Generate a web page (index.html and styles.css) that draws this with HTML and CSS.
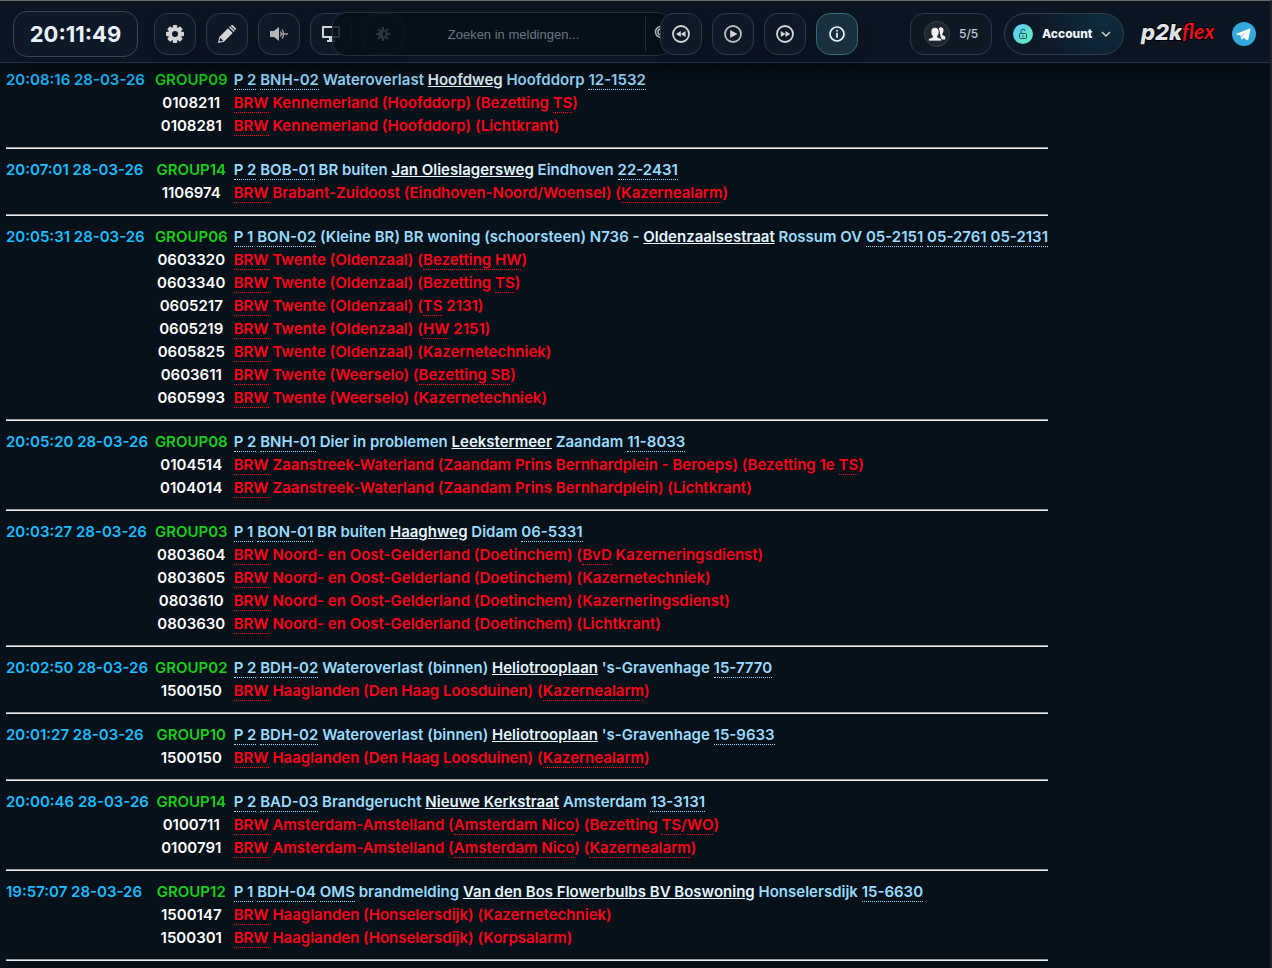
FILE: index.html
```html
<!DOCTYPE html>
<html lang="nl">
<head>
  <meta charset="UTF-8">
  <meta name="viewport" content="width=device-width, initial-scale=1.0">
  <title>p2kflex</title>
  <link rel="stylesheet" href="styles.css">
</head>
<body>
  <header class="topbar">
    <div class="clock">20:11:49</div>

    <div class="tools">
      <button class="tool" type="button" aria-label="Instellingen">
        <svg width="20" height="20" viewBox="0 0 20 20"><g fill="#d4d4d4"><rect x="7.8" y="1" width="4.4" height="18" rx="1"/><rect x="7.8" y="1" width="4.4" height="18" rx="1" transform="rotate(45 10 10)"/><rect x="7.8" y="1" width="4.4" height="18" rx="1" transform="rotate(90 10 10)"/><rect x="7.8" y="1" width="4.4" height="18" rx="1" transform="rotate(135 10 10)"/><circle cx="10" cy="10" r="6.8"/></g><circle cx="10" cy="10" r="3" fill="#0d1927"/></svg>
      </button>
      <button class="tool" type="button" aria-label="Bewerken">
        <svg width="20" height="20" viewBox="0 0 20 20"><path fill="#d4d4d4" d="M1 19l1.300-6L11 4.300l4.700 4.700L7 17.700zM12 3.300l1-1 4.700 4.700-1 1zM14 1.500c.6-.6 1.500-.6 2.100 0l2.400 2.400c.6.6.6 1.500 0 2.100l-.3.3-4.500-4.500z"/><path d="M3.200 13.800l3 3-2.900.7-.8-.8z" fill="#0d1927"/></svg>
      </button>
      <button class="tool" type="button" aria-label="Geluid">
        <svg width="20" height="20" viewBox="0 0 20 20"><path fill="#b8b8b8" d="M1 7h4l5-4v14l-5-4H1z"/><path d="M11.500 7.500q1.500 2.500 0 5M13 5.500q3 4.500 0 9" fill="none" stroke="#a5a5a5" stroke-width="1.300"/><path d="M12 10h7" stroke="#a5a5a5" stroke-width="1.500"/></svg>
      </button>
      <button class="tool" type="button" aria-label="Scherm">
        <svg width="20" height="20" viewBox="0 0 20 20"><path fill="#d4d4d4" fill-rule="evenodd" d="M2 2h16q1 0 1 1v10q0 1-1 1h-6v2h2v2H6v-2h2v-2H2q-1 0-1-1V3q0-1 1-1zm1 2v8h14V4z"/></svg>
      </button>
      <button class="tool" type="button" aria-label="Helderheid">
        <svg width="20" height="20" viewBox="0 0 20 20"><path d="M10 3v3M10 14v3M3 10h3M14 10h3M5 5l2 2M13 13l2 2M15 5l-2 2M7 13l-2 2" stroke="#e0e0e0" stroke-width="2"/><circle cx="10" cy="10" r="3.600" fill="none" stroke="#e0e0e0" stroke-width="1.800"/><path d="M10 6.400a3.600 3.600 0 0 0 0 7.200z" fill="#e0e0e0"/></svg>
      </button>
    </div>

    <form class="search">
      <input class="search-input" type="search" placeholder="Zoeken in meldingen..." aria-label="Zoeken in meldingen">
      <button class="search-button" type="button" aria-label="Zoeken">
        <svg width="18" height="18" viewBox="0 0 18 18" fill="none" stroke="#b5bcc2" stroke-width="1.500"><circle cx="7" cy="7" r="5.500"/><path d="M7 4a3 3 0 0 0 0 6M11 11l5 5"/></svg>
      </button>
    </form>

    <div class="tools player">
      <button class="tool" type="button" aria-label="Vorige">
        <svg width="20" height="20" viewBox="0 0 20 20"><circle cx="10" cy="10" r="8" fill="none" stroke="#d4d4d4" stroke-width="1.800"/><path fill="#d4d4d4" d="M9.800 7v6L5 10zM14.500 7v6l-4.700-3z"/></svg>
      </button>
      <button class="tool" type="button" aria-label="Afspelen">
        <svg width="20" height="20" viewBox="0 0 20 20"><circle cx="10" cy="10" r="8" fill="none" stroke="#bcbcbc" stroke-width="1.800"/><path fill="#d4d4d4" d="M7.200 6v8l7.300-4z"/></svg>
      </button>
      <button class="tool" type="button" aria-label="Volgende">
        <svg width="20" height="20" viewBox="0 0 20 20"><circle cx="10" cy="10" r="8" fill="none" stroke="#d4d4d4" stroke-width="1.800"/><path fill="#d4d4d4" d="M5.800 7v6l4.700-3zM10.500 7v6l4.700-3z"/></svg>
      </button>
      <button class="tool tool-active" type="button" aria-label="Informatie">
        <svg width="20" height="20" viewBox="0 0 20 20"><circle cx="10" cy="10" r="7" fill="none" stroke="#e5f7fc" stroke-width="1.700"/><path d="M10 8.800v5M10 6v1.500" stroke="#e5f7fc" stroke-width="1.700"/></svg>
      </button>
    </div>

    <div class="users">
      <span class="users-icon">
        <svg width="18" height="18" viewBox="0 0 18 18" fill="#f2f2f2"><path d="M10.800 3.500c.5-1.500 4.700-2 4.700 1.700 0 2-.8 2.800-1.200 3.600v1.300l3 1.500v3h-4z"/><path stroke="#2c333b" stroke-width=".8" d="M4.500 12.300V11C3.800 10 3 9 3 6.700 3 3.600 4.800 2.500 7 2.500s4.100 1.100 4.100 4.200c0 2.300-.8 3.300-1.500 4.300v1.300l4 1.500V16H.5v-2.200z"/></svg>
      </span>
      5/5
    </div>

    <button class="account" type="button">
      <span class="account-icon">
        <svg width="12" height="12" viewBox="0 0 12 12" fill="none" stroke="#17505a"><rect x="2.500" y="5.500" width="7" height="5" rx="1"/><path d="M4 5.500V3.300a2 2 0 0 1 4-.3M6 7.500v1.500"/></svg>
      </span>
      <span>Account</span>
      <svg width="10" height="10" viewBox="0 0 10 10" fill="none" stroke="#d7d5c8" stroke-width="1.400"><path d="M1 3l4 4 4-4"/></svg>
    </button>

    <a class="logo" href="#" aria-label="p2kflex">
      <svg width="80" height="40" viewBox="0 0 80 40">
        <g stroke="#000" stroke-width="2" paint-order="stroke" stroke-linejoin="round">
          <text class="logo-p2k" x="1" y="26">p2k</text>
          <text class="logo-flex" x="42" y="25">flex</text>
        </g>
      </svg>
    </a>

    <a class="telegram" href="#" aria-label="Telegram">
      <svg width="24" height="24" viewBox="0 0 24 24"><circle cx="12" cy="12" r="12" fill="#35a9de"/><path fill="#fff" d="M4.500 11.700L17.600 6.500c.6-.2 1.100.1.900 1L16.300 17.600c-.2.8-.7.900-1.300.6l-3.400-2.500-1.700 1.600c-.3.300-.8.200-.8-.2l-.6-3.500-3.900-1.200c-.6-.2-.6-.5-.1-.7z"/><path d="M8.700 13.400l7.300-4.700-5.700 5.500-.5 2.600z" fill="#bcdcee"/></svg>
    </a>
  </header>

  <main class="messages">
    <table class="message-table">
      <tr><td class="time">20:08:16 28-03-26</td><td class="group">GROUP09</td><td class="msg"><abbr>P 2</abbr> <abbr>BNH-02</abbr> Wateroverlast <a href="#">Hoofdweg</a> Hoofddorp <abbr>12-1532</abbr></td></tr>
      <tr><td></td><td class="code">0108211</td><td class="unit"><abbr>BRW</abbr> Kennemerland (Hoofddorp) (Bezetting <abbr>TS</abbr>)</td></tr>
      <tr><td></td><td class="code">0108281</td><td class="unit"><abbr>BRW</abbr> Kennemerland (Hoofddorp) (Lichtkrant)</td></tr>
      <tr><td class="divider" colspan="3"><hr></td></tr>

      <tr><td class="time">20:07:01 28-03-26</td><td class="group">GROUP14</td><td class="msg"><abbr>P 2</abbr> <abbr>BOB-01</abbr> BR buiten <a href="#">Jan Olieslagersweg</a> Eindhoven <abbr>22-2431</abbr></td></tr>
      <tr><td></td><td class="code">1106974</td><td class="unit"><abbr>BRW</abbr> Brabant-Zuidoost (Eindhoven-Noord/Woensel) (<abbr>Kazernealarm</abbr>)</td></tr>
      <tr><td class="divider" colspan="3"><hr></td></tr>

      <tr><td class="time">20:05:31 28-03-26</td><td class="group">GROUP06</td><td class="msg"><abbr>P 1</abbr> <abbr>BON-02</abbr> (Kleine BR) BR woning (schoorsteen) N736 - <a href="#">Oldenzaalsestraat</a> Rossum OV <abbr>05-2151</abbr> <abbr>05-2761</abbr> <abbr>05-2131</abbr></td></tr>
      <tr><td></td><td class="code">0603320</td><td class="unit"><abbr>BRW</abbr> Twente (Oldenzaal) (<abbr>Bezetting HW</abbr>)</td></tr>
      <tr><td></td><td class="code">0603340</td><td class="unit"><abbr>BRW</abbr> Twente (Oldenzaal) (Bezetting <abbr>TS</abbr>)</td></tr>
      <tr><td></td><td class="code">0605217</td><td class="unit"><abbr>BRW</abbr> Twente (Oldenzaal) (<abbr>TS</abbr> 2131)</td></tr>
      <tr><td></td><td class="code">0605219</td><td class="unit"><abbr>BRW</abbr> Twente (Oldenzaal) (<abbr>HW</abbr> 2151)</td></tr>
      <tr><td></td><td class="code">0605825</td><td class="unit"><abbr>BRW</abbr> Twente (Oldenzaal) (Kazernetechniek)</td></tr>
      <tr><td></td><td class="code">0603611</td><td class="unit"><abbr>BRW</abbr> Twente (Weerselo) (<abbr>Bezetting SB</abbr>)</td></tr>
      <tr><td></td><td class="code">0605993</td><td class="unit"><abbr>BRW</abbr> Twente (Weerselo) (Kazernetechniek)</td></tr>
      <tr><td class="divider" colspan="3"><hr></td></tr>

      <tr><td class="time">20:05:20 28-03-26</td><td class="group">GROUP08</td><td class="msg"><abbr>P 2</abbr> <abbr>BNH-01</abbr> Dier in problemen <a href="#">Leekstermeer</a> Zaandam <abbr>11-8033</abbr></td></tr>
      <tr><td></td><td class="code">0104514</td><td class="unit"><abbr>BRW</abbr> Zaanstreek-Waterland (Zaandam Prins Bernhardplein - Beroeps) (Bezetting 1e <abbr>TS</abbr>)</td></tr>
      <tr><td></td><td class="code">0104014</td><td class="unit"><abbr>BRW</abbr> Zaanstreek-Waterland (Zaandam Prins Bernhardplein) (Lichtkrant)</td></tr>
      <tr><td class="divider" colspan="3"><hr></td></tr>

      <tr><td class="time">20:03:27 28-03-26</td><td class="group">GROUP03</td><td class="msg"><abbr>P 1</abbr> <abbr>BON-01</abbr> BR buiten <a href="#">Haaghweg</a> Didam <abbr>06-5331</abbr></td></tr>
      <tr><td></td><td class="code">0803604</td><td class="unit"><abbr>BRW</abbr> Noord- en Oost-Gelderland (Doetinchem) (<abbr>BvD</abbr> Kazerneringsdienst)</td></tr>
      <tr><td></td><td class="code">0803605</td><td class="unit"><abbr>BRW</abbr> Noord- en Oost-Gelderland (Doetinchem) (Kazernetechniek)</td></tr>
      <tr><td></td><td class="code">0803610</td><td class="unit"><abbr>BRW</abbr> Noord- en Oost-Gelderland (Doetinchem) (Kazerneringsdienst)</td></tr>
      <tr><td></td><td class="code">0803630</td><td class="unit"><abbr>BRW</abbr> Noord- en Oost-Gelderland (Doetinchem) (Lichtkrant)</td></tr>
      <tr><td class="divider" colspan="3"><hr></td></tr>

      <tr><td class="time">20:02:50 28-03-26</td><td class="group">GROUP02</td><td class="msg"><abbr>P 2</abbr> <abbr>BDH-02</abbr> Wateroverlast (binnen) <a href="#">Heliotrooplaan</a> 's-Gravenhage <abbr>15-7770</abbr></td></tr>
      <tr><td></td><td class="code">1500150</td><td class="unit"><abbr>BRW</abbr> Haaglanden (Den Haag Loosduinen) (<abbr>Kazernealarm</abbr>)</td></tr>
      <tr><td class="divider" colspan="3"><hr></td></tr>

      <tr><td class="time">20:01:27 28-03-26</td><td class="group">GROUP10</td><td class="msg"><abbr>P 2</abbr> <abbr>BDH-02</abbr> Wateroverlast (binnen) <a href="#">Heliotrooplaan</a> 's-Gravenhage <abbr>15-9633</abbr></td></tr>
      <tr><td></td><td class="code">1500150</td><td class="unit"><abbr>BRW</abbr> Haaglanden (Den Haag Loosduinen) (<abbr>Kazernealarm</abbr>)</td></tr>
      <tr><td class="divider" colspan="3"><hr></td></tr>

      <tr><td class="time">20:00:46 28-03-26</td><td class="group">GROUP14</td><td class="msg"><abbr>P 2</abbr> <abbr>BAD-03</abbr> Brandgerucht <a href="#">Nieuwe Kerkstraat</a> Amsterdam <abbr>13-3131</abbr></td></tr>
      <tr><td></td><td class="code">0100711</td><td class="unit"><abbr>BRW</abbr> Amsterdam-Amstelland (<abbr>Amsterdam Nico</abbr>) (Bezetting <abbr>TS</abbr>/<abbr>WO</abbr>)</td></tr>
      <tr><td></td><td class="code">0100791</td><td class="unit"><abbr>BRW</abbr> Amsterdam-Amstelland (<abbr>Amsterdam Nico</abbr>) (<abbr>Kazernealarm</abbr>)</td></tr>
      <tr><td class="divider" colspan="3"><hr></td></tr>

      <tr><td class="time">19:57:07 28-03-26</td><td class="group">GROUP12</td><td class="msg"><abbr>P 1</abbr> <abbr>BDH-04</abbr> <abbr>OMS</abbr> brandmelding <a href="#">Van den Bos Flowerbulbs BV Boswoning</a> Honselersdijk <abbr>15-6630</abbr></td></tr>
      <tr><td></td><td class="code">1500147</td><td class="unit"><abbr>BRW</abbr> Haaglanden (Honselersdijk) (Kazernetechniek)</td></tr>
      <tr><td></td><td class="code">1500301</td><td class="unit"><abbr>BRW</abbr> Haaglanden (Honselersdijk) (Korpsalarm)</td></tr>
      <tr><td class="divider" colspan="3"><hr></td></tr>
    </table>
  </main>
</body>
</html>
```

FILE: styles.css
```css
* {
  box-sizing: border-box;
}

body {
  margin: 0;
  min-height: 100vh;
  background: #06111a;
  border-top: 1px solid #666;
  border-right: 2px solid #27211f;
  color: #fff;
  font-family: Inter, "Liberation Sans", sans-serif;
  font-size: 15px;
}

button {
  font-family: inherit;
  cursor: pointer;
}

svg {
  display: block;
  flex: none;
}

/* Top bar */
.topbar {
  position: relative;
  z-index: 2;
  display: flex;
  align-items: center;
  height: 62px;
  padding: 4px 14px 0 13px;
  background: linear-gradient(#0b1621, #0c1422);
  border-bottom: 1px solid #233344;
  box-shadow: 0 8px 24px rgba(0, 0, 0, 0.35);
}

.clock {
  display: flex;
  align-items: center;
  justify-content: center;
  width: 125px;
  height: 46px;
  margin-right: 16px;
  border: 1px solid #344555;
  border-radius: 14px;
  background: #0d1927;
  color: #e8f1fc;
  font-size: 22px;
  font-weight: 700;
}

.tools {
  display: flex;
  gap: 10px;
}

.tool {
  display: flex;
  align-items: center;
  justify-content: center;
  width: 42px;
  height: 42px;
  padding: 0;
  border: 1px solid #2b3a4a;
  border-radius: 14px;
  background: #0d1927;
  box-shadow: 0 4px 12px rgba(0, 0, 0, 0.2);
}

.tool-active {
  border-color: #2f6c7c;
  background: #1a303e;
}

/* Search bar slides over the last two tools */
.search {
  position: relative;
  z-index: 1;
  display: flex;
  align-items: center;
  flex: 1;
  min-width: 0;
  height: 44px;
  margin: 0 -20px 0 -72px;
  border: 1px solid #1f313e;
  border-radius: 14px;
  background: rgba(5, 16, 23, 0.82);
}

.search-input {
  flex: 1;
  min-width: 0;
  height: 36px;
  padding: 1px 0 0 62px;
  border: 0;
  border-right: 1px solid #1e2d38;
  background: none;
  color: #cbd5df;
  font-family: "Liberation Sans", sans-serif;
  font-size: 13px;
  text-align: center;
  outline: none;
  appearance: none;
}

.search-input::placeholder {
  color: #667780;
}

.search-button {
  width: 25px;
  padding: 0 0 0 8px;
  border: 0;
  background: none;
}

.player {
  position: relative;
  z-index: 2;
  margin-left: 8px;
}

.users {
  display: flex;
  align-items: center;
  gap: 9px;
  width: 82px;
  height: 42px;
  margin-left: 52px;
  padding-left: 13px;
  border: 1px solid #2b3a4a;
  border-radius: 14px;
  background: #0d1823;
  color: #c3ccd8;
  font-size: 12px;
  font-weight: 500;
}

.users-icon {
  display: flex;
  align-items: center;
  justify-content: center;
  width: 26px;
  height: 26px;
  border: 1px solid #343f49;
  border-radius: 50%;
  background: #1e2730;
}

.account {
  display: flex;
  align-items: center;
  gap: 9px;
  width: 120px;
  height: 42px;
  margin-left: 12px;
  padding: 0 8px;
  border: 1px solid #2b4152;
  border-radius: 21px;
  background: radial-gradient(circle at 85% 20%, #0d2c3d, #0d1927 60%);
  color: #f1f6fc;
  font-size: 12px;
  font-weight: 800;
}

.account-icon {
  display: flex;
  align-items: center;
  justify-content: center;
  width: 20px;
  height: 20px;
  border-radius: 50%;
  background: linear-gradient(135deg, #60c8ff, #5ff0b0);
}

.logo {
  margin-left: 16px;
}

.logo-p2k {
  fill: #dfe2e6;
  font-family: Inter, sans-serif;
  font-size: 22px;
  font-style: italic;
  font-weight: 800;
}

.logo-flex {
  fill: #e8101c;
  font-family: Lato, sans-serif;
  font-size: 21px;
  font-style: italic;
  font-weight: 700;
}

.telegram {
  margin-left: 12px;
}

/* Messages */
.messages {
  padding: 5px 6px 0;
}

.message-table {
  border-collapse: collapse;
  font-weight: 600;
  line-height: 23px;
  white-space: nowrap;
}

.message-table td {
  height: 23px;
  padding: 0 6px 0 0;
}

.message-table td:last-child {
  padding-right: 0;
}

.time {
  color: #1cbcff;
}

.group,
.code {
  text-align: center;
}

.group {
  color: #1bcc1b;
}

.msg {
  color: #99dbff;
}

.msg a {
  color: #e4f6ff;
}

.unit {
  color: #ff0018;
}

abbr {
  border-bottom: 1px dotted currentColor;
}

.message-table .divider {
  height: 21px;
}

.divider hr {
  margin: 0;
  border: 0;
  border-top: 1px solid #9a9a9a;
  border-bottom: 1px solid #eee;
}
```
